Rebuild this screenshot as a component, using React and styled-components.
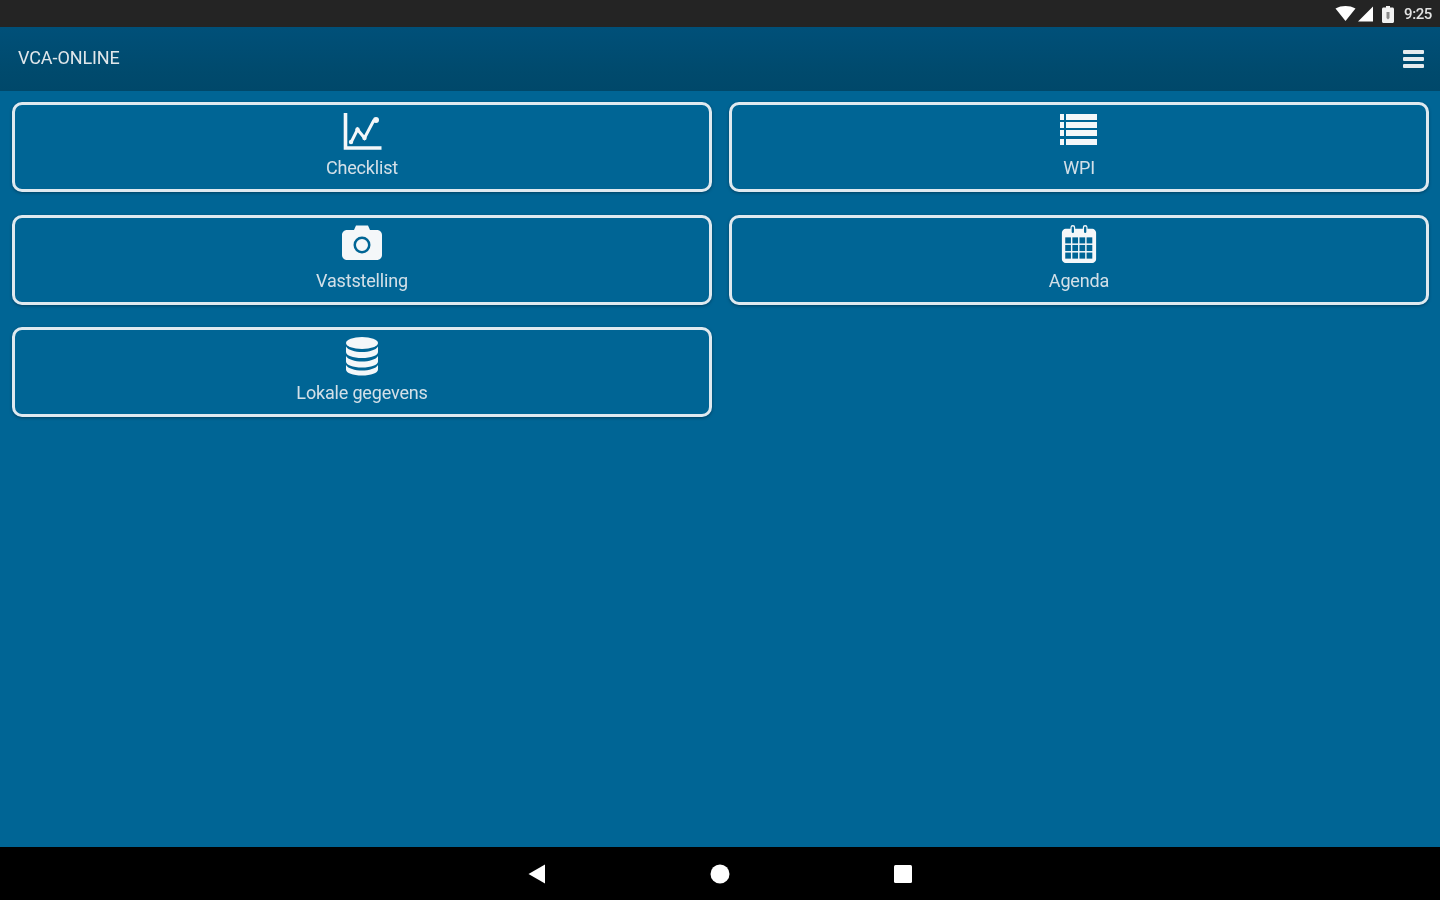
import React from 'react';
import styled, { createGlobalStyle } from 'styled-components';

const GlobalStyle = createGlobalStyle`
  html, body {
    margin: 0;
    padding: 0;
    height: 100%;
    background: #006595;
  }
  #root {
    height: 100%;
  }
`;

const Screen = styled.div`
  display: flex;
  flex-direction: column;
  width: 1440px;
  height: 900px;
  overflow: hidden;
  font-family: 'Roboto', 'Liberation Sans', sans-serif;
`;

const StatusBar = styled.div`
  display: flex;
  justify-content: flex-end;
  align-items: center;
  flex: 0 0 27px;
  padding: 1px 8px 0 0;
  box-sizing: border-box;
  background: #242424;
  color: #e4e4e4;
`;

const StatusIcon = styled.svg`
  display: block;
  margin-right: ${(p) => p.$gap}px;
  filter: blur(0.5px);
`;

const Clock = styled.span`
  font-size: 15px;
  font-weight: 500;
  letter-spacing: -0.4px;
  filter: blur(0.6px);
`;

const Header = styled.div`
  display: flex;
  justify-content: space-between;
  align-items: center;
  flex: 0 0 64px;
  padding: 0 16px 4px 18px;
  box-sizing: border-box;
  background: linear-gradient(#005079, #004a6d 70%, #00486a);
  box-shadow: 0 1px 1px rgba(0, 40, 60, 0.35);
`;

const Title = styled.div`
  color: #dfe6ea;
  font-size: 18px;
  letter-spacing: -0.1px;
  filter: blur(0.7px);
`;

const MenuButton = styled.div`
  display: flex;
  flex-direction: column;
  gap: 3px;
  width: 21px;
  margin-top: 4px;
  filter: blur(0.5px);
`;

const MenuBar = styled.span`
  display: block;
  height: 4px;
  border-radius: 1px;
  background: #e6ebee;
`;

const Content = styled.div`
  display: grid;
  flex: 1;
  grid-template-columns: 700px 700px;
  grid-auto-rows: 90px;
  column-gap: 17px;
  row-gap: 22.5px;
  align-content: start;
  padding: 11px 0 0 12px;
  background: #006595;
`;

const Tile = styled.div`
  display: flex;
  flex-direction: column;
  align-items: center;
  box-sizing: border-box;
  height: 90px;
  padding-top: 6px;
  border: 3px solid #dfe9ef;
  border-radius: 10px;
  box-shadow: 0 1px 3px rgba(0, 30, 50, 0.5);
  filter: blur(0.5px);
`;

const IconSlot = styled.div`
  display: flex;
  justify-content: center;
  align-items: center;
  height: 40px;
  color: #f4f7f9;
`;

const TileLabel = styled.div`
  margin-top: 7px;
  color: #d3e0e8;
  font-size: 18px;
  line-height: 20px;
  letter-spacing: -0.17px;
  filter: blur(0.4px);
`;

const NavBar = styled.div`
  display: flex;
  justify-content: center;
  align-items: center;
  gap: 164px;
  flex: 0 0 53px;
  box-sizing: border-box;
  background: #000;
`;

const NavIcon = styled.svg`
  display: block;
  filter: blur(0.5px);
`;

const ChartIcon = () => (
  <svg width="40" height="40" viewBox="0 -1 40 40" fill="none" stroke="currentColor">
    <path d="M3.5 1v35h36" strokeWidth="3.6" />
    <path d="M9 30.5l6.5-13 7 8.5 9.5-18" strokeWidth="3" />
    <g fill="currentColor" stroke="none">
      <circle cx="9" cy="30" r="2.2" />
      <circle cx="15.5" cy="17.5" r="2.2" />
      <circle cx="22.5" cy="26" r="2.2" />
      <circle cx="34" cy="8" r="3" />
    </g>
  </svg>
);

const ListIcon = () => (
  <svg width="40" height="40" viewBox="0 1 40 40" fill="currentColor">
    <path d="M1 4h4v6H1zM7 4h31v6H7zM1 12h4v6H1zM7 12h31v6H7zM1 20h4v6H1zM7 20h31v6H7zM1 29h4v6H1zM7 29h31v6H7z" />
  </svg>
);

const CameraIcon = () => (
  <svg width="40" height="40" viewBox="0 2 40 40">
    <path
      fill="currentColor"
      fillRule="evenodd"
      d="M5 8h7l2-4.500h12L28 8h7c2.800 0 5 2.200 5 5v20c0 2.800-2.200 5-5 5H5c-2.800 0-5-2.200-5-5V13c0-2.800 2.200-5 5-5zm15 6.500a8.500 8.500 0 1 0 0 17 8.500 8.500 0 0 0 0-17zm0 2.500a6 6 0 1 1 0 12 6 6 0 0 1 0-12z"
    />
  </svg>
);

const CalendarIcon = () => {
  const cells = [];
  for (let row = 0; row < 3; row++) {
    for (let col = 0; col < 4; col++) {
      cells.push(
        <rect key={`${row}-${col}`} x={5.5 + col * 7.5} y={13 + row * 8} width="6" height="6.4" fill="#006595" />,
      );
    }
  }
  return (
    <svg width="38" height="38" viewBox="0 0 40 40">
      <path
        fill="currentColor"
        d="M6 4h5V2.500a2.500 2.500 0 0 1 5 0V4h8V2.500a2.500 2.500 0 0 1 5 0V4h5c2 0 4 2 4 4v28c0 2-2 4-4 4H6c-2 0-4-2-4-4V8c0-2 2-4 4-4z"
      />
      <rect x="12.300" y="1.500" width="2.400" height="7" rx="1.200" fill="#006595" />
      <rect x="25.300" y="1.500" width="2.400" height="7" rx="1.200" fill="#006595" />
      {cells}
    </svg>
  );
};

const DatabaseIcon = () => (
  <svg width="40" height="40" viewBox="0 0 40 40" fill="currentColor">
    <ellipse cx="20" cy="7" rx="16" ry="6" />
    <path d="M4 10.500c2 3.600 9 5.500 16 5.500s14-1.900 16-5.500V16c0 3.500-7 6-16 6S4 19.500 4 16z" />
    <path d="M4 20c2 3.600 9 5.500 16 5.500S34 23.600 36 20v5.500c0 3.500-7 6-16 6s-16-2.500-16-6z" />
    <path d="M4 29c2 3.600 9 5.500 16 5.500S34 32.600 36 29v4.500c0 3.500-7 6-16 6s-16-2.500-16-6z" />
  </svg>
);

const tiles = [
  { label: 'Checklist', icon: <ChartIcon /> },
  { label: 'WPI', icon: <ListIcon /> },
  { label: 'Vaststelling', icon: <CameraIcon /> },
  { label: 'Agenda', icon: <CalendarIcon /> },
  { label: 'Lokale gegevens', icon: <DatabaseIcon /> },
];

const App = () => {
  return (
    <Screen>
      <GlobalStyle />
      <StatusBar>
        <StatusIcon $gap={1} width="21" height="16" viewBox="0 0 21 16" fill="#fff">
          <path d="M0.500 2.500C3.500 0.800 7 0 10.500 0s7 0.800 10 2.500L10.500 15z" />
        </StatusIcon>
        <StatusIcon $gap={8} width="17" height="16" viewBox="0 0 16 16" fill="#fff">
          <path d="M15.500 0.500V15.500H0.500z" />
        </StatusIcon>
        <StatusIcon $gap={10} width="12" height="17" viewBox="0 0 12 17">
          <path fill="#f2f2f2" d="M4 0h4v1.500h2.500c0.800 0 1.500 0.700 1.500 1.500v12.500c0 0.800-0.700 1.500-1.500 1.500h-9C0.700 17 0 16.300 0 15.500V3c0-0.800 0.700-1.500 1.500-1.500H4z" />
          <path fill="#8a8a8a" d="M4.500 6h3v6l-1.500 1.500L4.500 12z" />
        </StatusIcon>
        <Clock>9:25</Clock>
      </StatusBar>
      <Header>
        <Title>VCA-ONLINE</Title>
        <MenuButton>
          <MenuBar />
          <MenuBar />
          <MenuBar />
        </MenuButton>
      </Header>
      <Content>
        {tiles.map((tile) => (
          <Tile key={tile.label}>
            <IconSlot>{tile.icon}</IconSlot>
            <TileLabel>{tile.label}</TileLabel>
          </Tile>
        ))}
      </Content>
      <NavBar>
        <NavIcon width="18" height="20" viewBox="0 0 18 20" fill="#fff">
          <path d="M17 0.500V19.500L0.500 10z" />
        </NavIcon>
        <NavIcon width="20" height="20" viewBox="0 0 20 20" fill="#fff">
          <circle cx="10" cy="10" r="9.500" />
        </NavIcon>
        <NavIcon width="18" height="18" viewBox="0 0 18 18" fill="#fff">
          <rect x="0" y="0" width="18" height="18" rx="1.500" />
        </NavIcon>
      </NavBar>
    </Screen>
  );
};

export default App;
